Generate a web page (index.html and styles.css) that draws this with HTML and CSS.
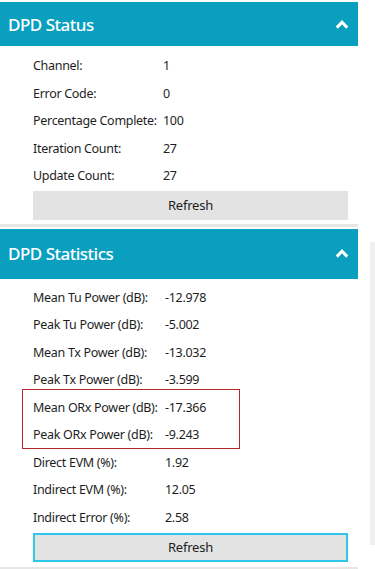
FILE: index.html
```html
<!DOCTYPE html>
<html>
<head>
<meta charset="utf-8">
<link rel="stylesheet" href="styles.css">
</head>
<body>
<div class="page">
  <section class="panel">
    <div class="header header-first">
      <span class="title">DPD Status</span>
      <svg class="chev" width="14" height="9" viewBox="0 0 14 9"><path d="M1.8 7.6 L7 2.2 L12.2 7.6" fill="none" stroke="#fff" stroke-width="3"/></svg>
    </div>
    <div class="body">
      <div class="rows status">
        <span>Channel:</span><span>1</span>
        <span>Error Code:</span><span>0</span>
        <span>Percentage Complete:</span><span>100</span>
        <span>Iteration Count:</span><span>27</span>
        <span>Update Count:</span><span>27</span>
      </div>
      <div class="btn">Refresh</div>
    </div>
  </section>
  <div class="sep"></div>
  <section class="panel panel-stats">
    <div class="header header-second">
      <span class="title">DPD Statistics</span>
      <svg class="chev" width="14" height="9" viewBox="0 0 14 9"><path d="M1.8 7.6 L7 2.2 L12.2 7.6" fill="none" stroke="#fff" stroke-width="3"/></svg>
    </div>
    <div class="body body-stats">
      <div class="rows stats first-rows">
        <span>Mean Tu Power (dB):</span><span>-12.978</span>
        <span>Peak Tu Power (dB):</span><span>-5.002</span>
        <span>Mean Tx Power (dB):</span><span>-13.032</span>
        <span>Peak Tx Power (dB):</span><span>-3.599</span>
      </div>
      <div class="highlight">
        <div class="rows stats">
          <span>Mean ORx Power (dB):</span><span>-17.366</span>
          <span>Peak ORx Power (dB):</span><span>-9.243</span>
        </div>
      </div>
      <div class="rows stats">
        <span>Direct EVM (%):</span><span>1.92</span>
        <span>Indirect EVM (%):</span><span>12.05</span>
        <span>Indirect Error (%):</span><span>2.58</span>
      </div>
      <div class="btn btn-focus">Refresh</div>
    </div>
  </section>
  <div class="sep sep-bottom"></div>
</div>
<div class="scroll"></div>
</body>
</html>
```

FILE: styles.css
```css
html, body {
  margin: 0;
  padding: 0;
  background: #ffffff;
}
body {
  font-family: "Noto Sans", "Open Sans", sans-serif;
  color: #1e1e1e;
  width: 375px;
  height: 569px;
  overflow: hidden;
  position: relative;
}
.page {
  width: 358px;
  padding-top: 2px;
}
.header {
  background: #0a9fbf;
  display: flex;
  align-items: center;
  justify-content: space-between;
  padding: 0 8px 0 8px;
  color: #fff;
}
.header-first {
  height: 44px;
}
.header-second {
  height: 50px;
}
.title {
  font-size: 17px;
  font-weight: 500;
  letter-spacing: -0.5px;
}
.chev {
  margin-right: 1px;
}
.body {
  padding: 0 10px 0 33px;
}
.rows {
  display: grid;
  grid-template-columns: 130px 1fr;
  font-size: 12.5px;
  letter-spacing: -0.3px;
}
.rows span {
  height: 27.5px;
  line-height: 27.5px;
  white-space: nowrap;
}
.status {
  padding-top: 6px;
}
.stats {
  grid-template-columns: 132px 1fr;
}
.first-rows {
  padding-top: 5px;
}
.highlight {
  box-sizing: border-box;
  height: 60px;
  margin-top: -5px;
  margin-left: -11px;
  padding-top: 4px;
  padding-left: 10px;
  width: 218px;
  border: 1px solid #b3282d;
}
.highlight .rows {
  height: 55px;
}
.btn {
  height: 29px;
  line-height: 29px;
  margin-top: 1px;
  background: #e3e3e3;
  text-align: center;
  font-size: 13px;
  letter-spacing: -0.2px;
  width: 315px;
  box-sizing: border-box;
}
.btn-focus {
  border: 2px solid #2ec6ec;
  line-height: 25px;
  margin-top: 2px;
}
.sep {
  height: 3px;
  background: #e6e6e6;
  margin-top: 4px;
  margin-bottom: 2px;
}
.sep-bottom {
  margin-top: 5px;
}
.scroll {
  position: absolute;
  left: 370px;
  top: 242px;
  width: 5px;
  height: 303px;
  background: #efefef;
}
```
